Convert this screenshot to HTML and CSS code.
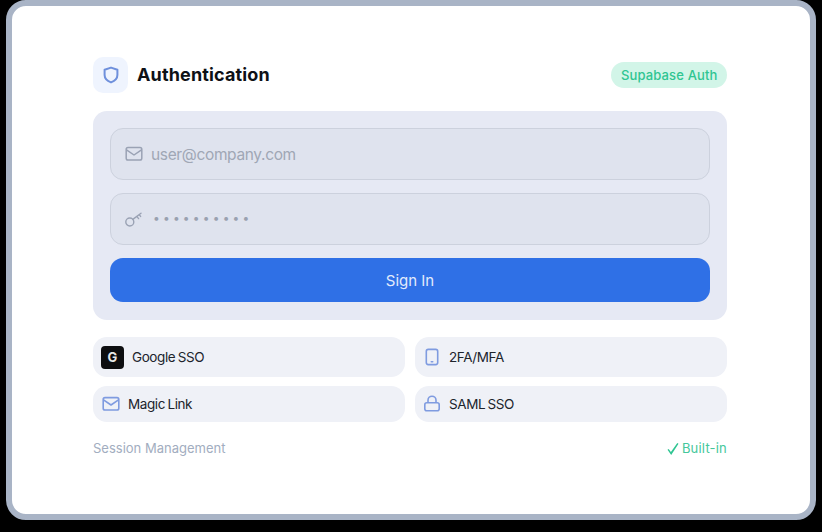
FILE: index.html
```html
<!DOCTYPE html>
<html lang="en">
<head>
    <meta charset="UTF-8">
    <title>Authentication</title>
    <link rel="stylesheet" href="styles.css">
</head>
<body>
    <div class="frame">
        <div class="header">
            <div class="title-group">
                <div class="shield-box">
                    <svg width="18" height="18" viewBox="0 0 18 18" fill="none" stroke="#6f90dc" stroke-width="2" stroke-linejoin="round"><path d="M9 1.600 15.400 3.800v5.200c0 3.600-2.800 6-6.400 7.400C5.400 15 2.600 12.600 2.600 9V3.800z"/></svg>
                </div>
                <h1>Authentication</h1>
            </div>
            <span class="badge">Supabase Auth</span>
        </div>

        <div class="panel">
            <div class="field">
                <svg width="18" height="18" viewBox="0 0 18 18" fill="none" stroke="#9aa2b4" stroke-width="1.500" stroke-linejoin="round"><rect x="1.200" y="2.600" width="15.600" height="12.400" rx="1.800"/><path d="M1.500 4.800 9 10l7.500-5.200"/></svg>
                <span class="field-text">user@company.com</span>
            </div>
            <div class="field">
                <svg width="18" height="18" viewBox="0 0 18 18" fill="none" stroke="#9aa2b4" stroke-width="1.400" stroke-linecap="round"><circle cx="4.800" cy="12" r="4"/><path d="M7.800 9.400 16 3.200M11.800 6.400l1.800 2.200M14.200 4.600l1.400 1.800"/></svg>
                <span class="dots">••••••••••</span>
            </div>
            <button class="sign-in">Sign In</button>
        </div>

        <div class="chips">
            <div class="chip">
                <span class="g-logo">G</span>
                <span class="chip-label">Google SSO</span>
            </div>
            <div class="chip">
                <svg width="18" height="20" viewBox="0 0 18 20" fill="none" stroke="#7f9be0" stroke-width="1.600"><rect x="3.300" y="2.400" width="11.400" height="15.200" rx="2"/><path d="M8.300 14.800h1.400" stroke-linecap="round"/></svg>
                <span class="chip-label">2FA/MFA</span>
            </div>
            <div class="chip chip-mail">
                <svg width="18" height="18" viewBox="0 0 18 18" fill="none" stroke="#7f9be0" stroke-width="1.600" stroke-linejoin="round"><rect x="1.200" y="2.600" width="15.600" height="12.400" rx="1.800"/><path d="M1.500 4.800 9 10l7.500-5.200"/></svg>
                <span class="chip-label">Magic Link</span>
            </div>
            <div class="chip">
                <svg width="18" height="18" viewBox="0 0 18 18" fill="none" stroke="#7f9be0" stroke-width="1.600"><rect x="1.800" y="7.800" width="14.400" height="8" rx="2"/><path d="M5 7.800V5.200a4 4 0 0 1 8 0v2.600"/></svg>
                <span class="chip-label">SAML SSO</span>
            </div>
        </div>

        <div class="footer-row">
            <span class="session">Session Management</span>
            <span class="built-in">
                <svg width="12" height="14" viewBox="0 0 12 14" fill="#2fc592"><path d="M0.500 7.800 1.700 7 3.900 10 10.300 1 11.500 1.800 4.200 13z"/></svg>
                Built-in
            </span>
        </div>
    </div>
</body>
</html>
```

FILE: styles.css
```css
/* Page and outer frame */
html, body {
  height: 532px;
  margin: 0;
  overflow: hidden;
  background-color: #000;
}

body {
  padding: 0 6px;
  font-family: Inter, "Noto Sans", sans-serif;
}

.frame {
  box-sizing: border-box;
  width: 810px;
  height: 520px;
  padding: 51px 83px 0 81px;
  background-color: #fff;
  border: 6px solid #a9b4c6;
  border-radius: 20px;
}

/* Header */
.header {
  display: flex;
  align-items: center;
  justify-content: space-between;
  height: 36px;
  margin-bottom: 18px;
}

.title-group {
  display: flex;
  align-items: center;
  gap: 9px;
}

.shield-box {
  display: flex;
  align-items: center;
  justify-content: center;
  width: 35px;
  height: 36px;
  background-color: #eff4fe;
  border-radius: 10px;
}

h1 {
  margin: 0;
  padding-bottom: 1px;
  font-size: 18px;
  font-weight: 700;
  letter-spacing: 0.150px;
  color: #0e1116;
}

.badge {
  padding: 5px 9.500px;
  font-size: 13px;
  font-weight: 500;
  line-height: 16px;
  letter-spacing: 0.140px;
  color: #2fc592;
  background-color: #d2f5e8;
  border-radius: 13px;
}

/* Login panel */
.panel {
  display: flex;
  flex-direction: column;
  gap: 13px;
  height: 209px;
  box-sizing: border-box;
  padding: 17px;
  background-color: #e6e9f4;
  border-radius: 14px;
}

.field {
  display: flex;
  align-items: center;
  gap: 8px;
  box-sizing: border-box;
  height: 52px;
  padding: 0 14px;
  color: #a0a7b5;
  background-color: #dfe3ee;
  border: 1px solid #ccd1dd;
  border-radius: 13px;
}

.field-text {
  font-size: 15.500px;
  letter-spacing: -0.350px;
}

.dots {
  padding-left: 2px;
  padding-bottom: 3px;
  font-size: 12px;
  letter-spacing: 3.200px;
  color: #9aa1b0;
}

.sign-in {
  height: 44px;
  padding: 0;
  font: 400 15px Inter, "Noto Sans", sans-serif;
  color: #e3ebfb;
  background-color: #2f70e6;
  border: none;
  border-radius: 13px;
}

/* Feature chips */
.chips {
  display: grid;
  grid-template-columns: 312px 312px;
  grid-template-rows: 40px 36px;
  gap: 9px 10px;
  margin-top: 17px;
}

.chip {
  display: flex;
  align-items: center;
  gap: 8px;
  padding: 0 8px;
  background-color: #eff1f7;
  border-radius: 14px;
}

.chip-mail {
  padding-left: 9px;
}

.chip-label {
  font-size: 13.500px;
  letter-spacing: -0.400px;
  word-spacing: -1px;
  color: #20242c;
}

.g-logo {
  display: flex;
  align-items: center;
  justify-content: center;
  width: 23px;
  height: 23px;
  font-size: 13px;
  font-weight: 700;
  color: #e8e8e8;
  background-color: #0d0e10;
  border-radius: 4px;
}

/* Footer line */
.footer-row {
  display: flex;
  justify-content: space-between;
  margin-top: 18px;
  font-size: 13px;
  line-height: 17px;
}

.session {
  color: #a2adc0;
}

.built-in {
  display: flex;
  align-items: center;
  gap: 3px;
  letter-spacing: 0.200px;
  color: #45c79b;
}
```
